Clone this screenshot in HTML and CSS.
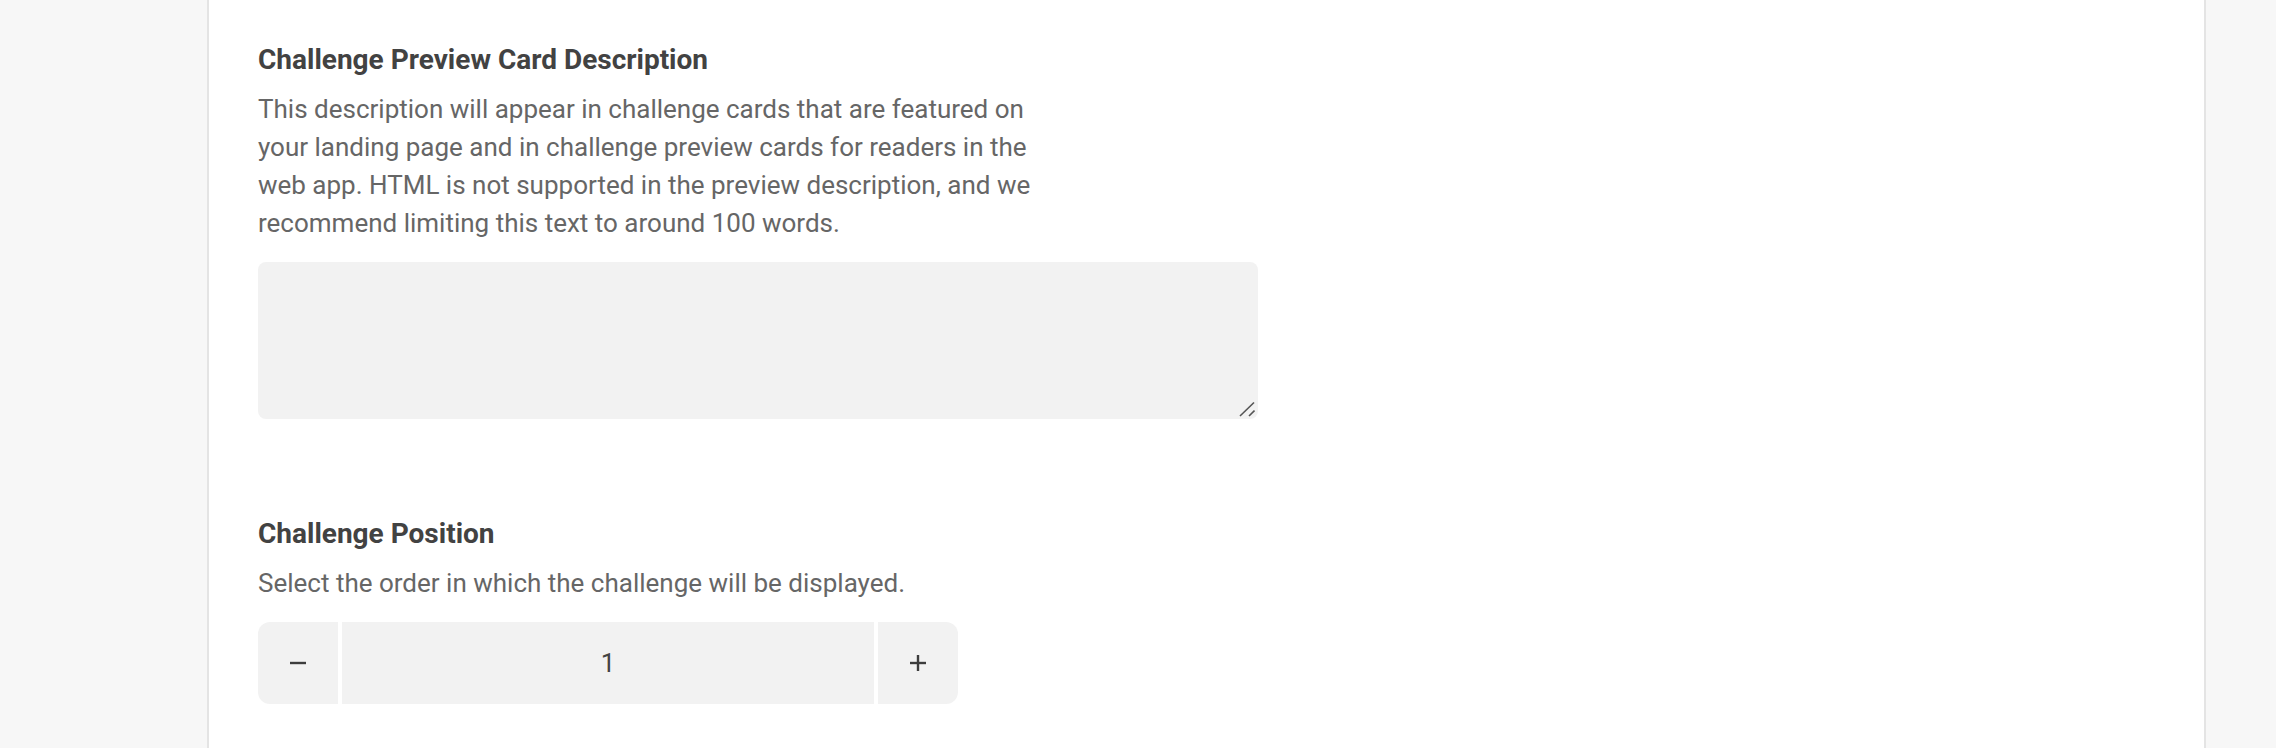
FILE: index.html
```html
<!DOCTYPE html>
<html lang="en">
<head>
<meta charset="utf-8">
<title>Challenge settings</title>
<link rel="stylesheet" href="styles.css">
</head>
<body>
<div class="page">
  <main class="card">
    <section class="field">
      <h2 class="field-title">Challenge Preview Card Description</h2>
      <p class="field-help">This description will appear in challenge cards that are featured on your landing page and in challenge preview cards for readers in the web app. HTML is not supported in the preview description, and we recommend limiting this text to around 100 words.</p>
      <div class="textarea-wrap">
        <textarea class="textarea" aria-label="Challenge Preview Card Description"></textarea>
        <svg class="grip" width="16" height="16" viewBox="0 0 16 16" aria-hidden="true"><line x1="1" y1="15" x2="15" y2="1.5" stroke="#555" stroke-width="1.6"/><line x1="10" y1="15" x2="15.5" y2="9.5" stroke="#555" stroke-width="1.6"/></svg>
      </div>
    </section>
    <section class="field field-position">
      <h2 class="field-title">Challenge Position</h2>
      <p class="field-help">Select the order in which the challenge will be displayed.</p>
      <div class="stepper">
        <button class="step-btn step-left" type="button" aria-label="Decrease">
          <svg width="16" height="16" viewBox="0 0 16 16"><line x1="0" y1="8" x2="16" y2="8" stroke="#3d3d3d" stroke-width="2.4"/></svg>
        </button>
        <div class="step-value">1</div>
        <button class="step-btn step-right" type="button" aria-label="Increase">
          <svg width="16" height="16" viewBox="0 0 16 16"><line x1="0" y1="8" x2="16" y2="8" stroke="#3d3d3d" stroke-width="2.4"/><line x1="8" y1="0" x2="8" y2="16" stroke="#3d3d3d" stroke-width="2.4"/></svg>
        </button>
      </div>
    </section>
  </main>
</div>
</body>
</html>
```
FILE: styles.css
```css
html, body {
  margin: 0;
  padding: 0;
  height: 100%;
  background: #f7f7f7;
  font-family: Roboto, "Liberation Sans", Arial, sans-serif;
}

.page {
  display: flex;
  height: 748px;
  padding-left: 207px;
  padding-right: 70px;
  overflow: hidden;
}

.card {
  flex: 1;
  background: #ffffff;
  border-left: 2px solid #e4e4e4;
  border-right: 2px solid #e4e4e4;
  padding: 44px 49px 0;
}

.field {
  display: flex;
  flex-direction: column;
  align-items: flex-start;
}

.field-position {
  margin-top: 99px;
}

.field-title {
  margin: 0;
  font-size: 28px;
  line-height: 32px;
  font-weight: 700;
  color: #424242;
}

.field-help {
  margin: 14px 0 0;
  max-width: 790px;
  font-size: 26px;
  line-height: 38px;
  color: #666666;
}

.textarea-wrap {
  position: relative;
  margin-top: 20px;
  width: 1000px;
  height: 157px;
}

.textarea {
  display: block;
  width: 100%;
  height: 100%;
  box-sizing: border-box;
  border: none;
  border-radius: 8px;
  background: #f2f2f2;
  font-family: inherit;
  font-size: 24px;
  padding: 12px 16px;
  outline: none;
  resize: none;
}

.grip {
  position: absolute;
  right: 3px;
  bottom: 2px;
  pointer-events: none;
}

.stepper {
  margin-top: 20px;
  display: flex;
  gap: 4px;
  height: 82px;
}

.step-btn {
  width: 80px;
  border: none;
  background: #f2f2f2;
  padding: 0;
  display: flex;
  align-items: center;
  justify-content: center;
  cursor: pointer;
}

.step-left {
  border-radius: 12px 0 0 12px;
}

.step-right {
  border-radius: 0 12px 12px 0;
}

.step-value {
  width: 532px;
  background: #f2f2f2;
  display: flex;
  align-items: center;
  justify-content: center;
  font-size: 26px;
  color: #444444;
}
```
